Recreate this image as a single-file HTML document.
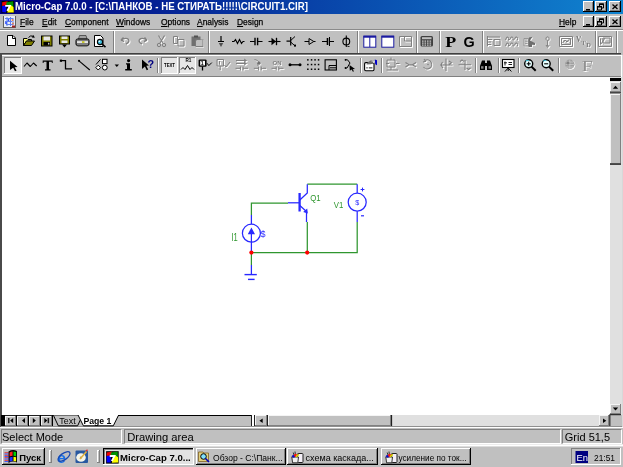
<!DOCTYPE html>
<html><head><meta charset="utf-8">
<style>
*{margin:0;padding:0;box-sizing:border-box}
html,body{width:623px;height:467px;overflow:hidden;background:#c0c0c0;font-family:"Liberation Sans",sans-serif;position:relative;-webkit-font-smoothing:antialiased}
body{will-change:transform}
.a{position:absolute}
.t{position:absolute;white-space:nowrap;line-height:1}
.sunk{position:absolute;border-top:1px solid #808080;border-left:1px solid #808080;border-right:1px solid #fff;border-bottom:1px solid #fff}
.mn{position:absolute;white-space:nowrap;line-height:1;font-size:9.4px;color:#000;top:17px;transform:scaleX(.9);transform-origin:0 0;-webkit-text-stroke:0.25px #000}
svg{position:absolute;left:0;top:0;overflow:visible}
</style></head><body>

<!-- Title bar -->
<div class="a" style="left:0;top:0;width:623px;height:14px;background:linear-gradient(to right,#000080,#1084d0)"></div>
<div class="t" style="left:15px;top:1.1px;font-size:9.9px;font-weight:bold;color:#fff;transform:scaleX(.98) scaleY(1.08);transform-origin:0 0">Micro-Cap 7.0.0 - [C:\ПАНКОВ - НЕ СТИРАТЬ!!!!!\CIRCUIT1.CIR]</div>

<!-- Menu bar -->
<div class="a" style="left:0;top:29px;width:623px;height:1px;background:#8a8a8a"></div>
<div class="a" style="left:0;top:30px;width:623px;height:1px;background:#fff"></div>

<div class="mn" style="left:20px"><u>F</u>ile</div>
<div class="mn" style="left:42px"><u>E</u>dit</div>
<div class="mn" style="left:65px"><u>C</u>omponent</div>
<div class="mn" style="left:116px"><u>W</u>indows</div>
<div class="mn" style="left:160.5px"><u>O</u>ptions</div>
<div class="mn" style="left:197px"><u>A</u>nalysis</div>
<div class="mn" style="left:236.5px"><u>D</u>esign</div>
<div class="mn" style="left:559px"><u>H</u>elp</div>

<!-- Toolbar 2 frame -->
<div class="a" style="left:0;top:53px;width:621px;height:1px;background:#404040"></div>
<div class="a" style="left:0;top:54px;width:621px;height:1px;background:#808080"></div>
<div class="a" style="left:2px;top:55px;width:619px;height:1px;background:#fff"></div>
<div class="a" style="left:0;top:76px;width:621px;height:1px;background:#808080"></div>
<div class="a" style="left:0;top:53px;width:2px;height:374px;background:#4a4a4a"></div>

<!-- Canvas -->
<div class="a" style="left:2px;top:77px;width:608px;height:338px;background:#fff"></div>

<!-- Tab row -->
<div class="a" style="left:2px;top:415px;width:619px;height:12px;background:#c0c0c0"></div>
<div class="a" style="left:0;top:427px;width:623px;height:1px;background:#fff"></div>

<!-- Status bar -->
<div class="sunk" style="left:1px;top:429px;width:121px;height:15px"></div>
<div class="sunk" style="left:124px;top:429px;width:437px;height:15px"></div>
<div class="sunk" style="left:562px;top:429px;width:60px;height:15px"></div>
<div class="t" style="left:2px;top:431.6px;font-size:11px;color:#000">Select Mode</div>
<div class="t" style="left:127.2px;top:431.6px;font-size:11.2px;color:#000">Drawing area</div>
<div class="t" style="left:564.8px;top:431.6px;font-size:11px;color:#000">Grid 51,5</div>

<!-- Taskbar -->
<div class="a" style="left:0;top:444px;width:623px;height:1px;background:#ececec"></div><div class="a" style="left:0;top:445px;width:623px;height:1px;background:#fff"></div><div class="a" style="left:0;top:446px;width:623px;height:1px;background:#dcdcdc"></div>

<!--SVG-->
<svg width="623" height="467" viewBox="0 0 623 467">
<g shape-rendering="crispEdges"><rect x="583" y="1" width="11" height="11" fill="#c0c0c0"/><rect x="583" y="1" width="11" height="1" fill="#fff"/><rect x="583" y="1" width="1" height="11" fill="#fff"/><rect x="583" y="11" width="11" height="1" fill="#000"/><rect x="593" y="1" width="1" height="11" fill="#000"/><rect x="584" y="10" width="9" height="1" fill="#808080"/><rect x="592" y="2" width="1" height="9" fill="#808080"/><rect x="595" y="1" width="12" height="11" fill="#c0c0c0"/><rect x="595" y="1" width="12" height="1" fill="#fff"/><rect x="595" y="1" width="1" height="11" fill="#fff"/><rect x="595" y="11" width="12" height="1" fill="#000"/><rect x="606" y="1" width="1" height="11" fill="#000"/><rect x="596" y="10" width="10" height="1" fill="#808080"/><rect x="605" y="2" width="1" height="9" fill="#808080"/><rect x="609" y="1" width="12" height="11" fill="#c0c0c0"/><rect x="609" y="1" width="12" height="1" fill="#fff"/><rect x="609" y="1" width="1" height="11" fill="#fff"/><rect x="609" y="11" width="12" height="1" fill="#000"/><rect x="620" y="1" width="1" height="11" fill="#000"/><rect x="610" y="10" width="10" height="1" fill="#808080"/><rect x="619" y="2" width="1" height="9" fill="#808080"/><rect x="583" y="16" width="11" height="11" fill="#c0c0c0"/><rect x="583" y="16" width="11" height="1" fill="#fff"/><rect x="583" y="16" width="1" height="11" fill="#fff"/><rect x="583" y="26" width="11" height="1" fill="#000"/><rect x="593" y="16" width="1" height="11" fill="#000"/><rect x="584" y="25" width="9" height="1" fill="#808080"/><rect x="592" y="17" width="1" height="9" fill="#808080"/><rect x="595" y="16" width="12" height="11" fill="#c0c0c0"/><rect x="595" y="16" width="12" height="1" fill="#fff"/><rect x="595" y="16" width="1" height="11" fill="#fff"/><rect x="595" y="26" width="12" height="1" fill="#000"/><rect x="606" y="16" width="1" height="11" fill="#000"/><rect x="596" y="25" width="10" height="1" fill="#808080"/><rect x="605" y="17" width="1" height="9" fill="#808080"/><rect x="609" y="16" width="12" height="11" fill="#c0c0c0"/><rect x="609" y="16" width="12" height="1" fill="#fff"/><rect x="609" y="16" width="1" height="11" fill="#fff"/><rect x="609" y="26" width="12" height="1" fill="#000"/><rect x="620" y="16" width="1" height="11" fill="#000"/><rect x="610" y="25" width="10" height="1" fill="#808080"/><rect x="619" y="17" width="1" height="9" fill="#808080"/></g><rect x="586" y="9" width="4" height="1.5" fill="#000"/><path d="M599.5 4 H603.5 V8 H599.5 Z" fill="none" stroke="#000" stroke-width="1"/><rect x="599" y="3.5" width="5" height="1.5" fill="#000"/><path d="M597.5 6.5 H601.5 V10 H597.5 Z" fill="#c0c0c0" stroke="#000" stroke-width="1"/><rect x="597" y="6" width="5" height="1.5" fill="#000"/><path d="M612.5 4.5 L617.5 9 M617.5 4.5 L612.5 9" stroke="#000" stroke-width="1.3"/><rect x="586" y="24" width="4" height="1.5" fill="#000"/><path d="M599.5 19 H603.5 V23 H599.5 Z" fill="none" stroke="#000" stroke-width="1"/><rect x="599" y="18.5" width="5" height="1.5" fill="#000"/><path d="M597.5 21.5 H601.5 V25 H597.5 Z" fill="#c0c0c0" stroke="#000" stroke-width="1"/><rect x="597" y="21" width="5" height="1.5" fill="#000"/><path d="M612.5 19.5 L617.5 24 M617.5 19.5 L612.5 24" stroke="#000" stroke-width="1.3"/><rect x="1.6" y="1" width="12.6" height="12" fill="#000"/>
<path d="M2.2 2.2 L7.6 1.3 L6.8 5.2 L2.2 5.9 Z" fill="#f00000"/>
<path d="M6.4 2.2 L13.2 1.3 L13.4 7.5 L6.2 5.4 Z" fill="#009000"/>
<path d="M2.1 5.9 L6.5 5.4 L6.2 12.4 L2.2 12.3 Z" fill="#0000ff"/>
<path d="M9.8 4.6 L13.5 7 L13.8 12.4 L7.3 12.6 L8.4 8.8 Z" fill="#ffff00"/>
<path d="M5.2 5.8 H9.9 L7.3 10.9" fill="none" stroke="#fff" stroke-width="1.8"/>
<g shape-rendering="crispEdges">
<rect x="3" y="15.5" width="12.5" height="12.5" fill="#606060"/>
<rect x="3.8" y="16.3" width="11" height="11" fill="#e8ecf8"/>
</g>
<path d="M5 18.5 H13 M5 21.5 H12 M6 24.5 H13 M7 17 V26 M10.5 17 V26 M13 18 V25" stroke="#6080f0" stroke-width="1" fill="none"/>
<circle cx="6" cy="23" r="1" fill="#2040ff"/><circle cx="8.5" cy="20" r="0.9" fill="#2040ff"/><circle cx="12.5" cy="20" r="0.9" fill="#f08040"/><circle cx="13" cy="23.5" r="0.9" fill="#f08040"/>
<rect x="12" y="25.5" width="3" height="2" fill="#a02020"/>

<rect x="113" y="31" width="1" height="22" fill="#808080" shape-rendering="crispEdges"/><rect x="114" y="31" width="1" height="22" fill="#fff" shape-rendering="crispEdges"/>
<rect x="208" y="31" width="1" height="22" fill="#808080" shape-rendering="crispEdges"/><rect x="209" y="31" width="1" height="22" fill="#fff" shape-rendering="crispEdges"/>
<rect x="357" y="31" width="1" height="22" fill="#808080" shape-rendering="crispEdges"/><rect x="358" y="31" width="1" height="22" fill="#fff" shape-rendering="crispEdges"/>
<rect x="416" y="31" width="1" height="22" fill="#808080" shape-rendering="crispEdges"/><rect x="417" y="31" width="1" height="22" fill="#fff" shape-rendering="crispEdges"/>
<rect x="439" y="31" width="1" height="22" fill="#808080" shape-rendering="crispEdges"/><rect x="440" y="31" width="1" height="22" fill="#fff" shape-rendering="crispEdges"/>
<rect x="482" y="31" width="1" height="22" fill="#808080" shape-rendering="crispEdges"/><rect x="483" y="31" width="1" height="22" fill="#fff" shape-rendering="crispEdges"/>
<rect x="595" y="31" width="1" height="22" fill="#808080" shape-rendering="crispEdges"/><rect x="596" y="31" width="1" height="22" fill="#fff" shape-rendering="crispEdges"/>
<rect x="616" y="31" width="1" height="22" fill="#808080" shape-rendering="crispEdges"/><rect x="617" y="31" width="1" height="22" fill="#fff" shape-rendering="crispEdges"/>
<path d="M7.5 35.5 H13 L15.5 38 V45.5 H7.5 Z" fill="#fff" stroke="#000" stroke-width="1"/>
<path d="M12.5 35.5 V38.5 H15.5" fill="none" stroke="#000" stroke-width="1"/>
<path d="M23.5 38.5 H27 L28 39.5 H31.5 V41 H26.5 L23.5 45.5 Z" fill="#ffff80" stroke="#000" stroke-width="1"/>
<path d="M26.5 41 H34.5 L31.5 45.5 H23.5 Z" fill="#808000" stroke="#000" stroke-width="1"/>
<path d="M28.5 37.5 Q30.5 35 33 36.2" fill="none" stroke="#000" stroke-width="1"/>
<path d="M33.5 35 L34.8 37.8 L31.8 37.6 Z" fill="#000"/>
<rect x="41" y="35.5" width="11.5" height="11" fill="#000"/>
<rect x="42" y="36.5" width="9.5" height="9" fill="#808000"/>
<rect x="43.5" y="36.5" width="6.5" height="4" fill="#e8e8e8"/>
<rect x="43.5" y="42" width="6.5" height="3.5" fill="#000"/>
<rect x="48" y="42.8" width="1.4" height="1.8" fill="#c0c0c0"/>
<rect x="59" y="35.5" width="11" height="9" fill="#000"/>
<rect x="60" y="36.5" width="9" height="7" fill="#808000"/>
<rect x="61.5" y="36.5" width="6" height="2.5" fill="#e8e8e8"/>
<rect x="61.5" y="40.5" width="6" height="2.5" fill="#e8e8e8"/>
<path d="M62 44.5 H67 L64.5 47.5 Z" fill="#000"/>
<path d="M79.5 35.5 H86 L87 39 H78.5 Z" fill="#a0a0a0" stroke="#404040" stroke-width="0.8"/>
<rect x="76" y="39" width="13" height="6.5" rx="1.5" fill="#808080" stroke="#000" stroke-width="1"/>
<rect x="77" y="41.3" width="11" height="1.5" fill="#fff"/>
<rect x="82" y="41.3" width="2.5" height="1.5" fill="#c0c000"/>
<rect x="77.5" y="45" width="10" height="1.5" fill="#404040"/>
<path d="M94.5 35.5 H100.5 L103 38 V46.5 H94.5 Z" fill="#fff" stroke="#000" stroke-width="1"/>
<circle cx="100" cy="42" r="2.6" fill="#40c0e0" stroke="#000" stroke-width="1.1"/>
<path d="M102 44 L105.5 47.2" stroke="#000" stroke-width="1.6"/>
<circle cx="99.3" cy="41.3" r="0.8" fill="#fff"/>
<path d="M121 40 L123.5 37.5 M121 40 L124 41.5 M121 40 Q126 37 128.5 39.5 Q130 42 126 44" fill="none" stroke="#fff" stroke-width="1.4" transform="translate(1,1)"/><path d="M121 40 L123.5 37.5 M121 40 L124 41.5 M121 40 Q126 37 128.5 39.5 Q130 42 126 44" fill="none" stroke="#808080" stroke-width="1.4"/>
<path d="M147 40 L144.5 37.5 M147 40 L144 41.5 M147 40 Q142 37 139.5 39.5 Q138 42 142 44" fill="none" stroke="#fff" stroke-width="1.4" transform="translate(1,1)"/><path d="M147 40 L144.5 37.5 M147 40 L144 41.5 M147 40 Q142 37 139.5 39.5 Q138 42 142 44" fill="none" stroke="#808080" stroke-width="1.4"/>
<path d="M158.5 35.5 L163 43 M164.5 35.5 L160 43" fill="none" stroke="#fff" stroke-width="1.1" transform="translate(1,1)"/><path d="M158.5 35.5 L163 43 M164.5 35.5 L160 43" fill="none" stroke="#808080" stroke-width="1.1"/>
<circle cx="159" cy="45" r="1.7" fill="none" stroke="#808080" stroke-width="1"/><circle cx="164" cy="45" r="1.7" fill="none" stroke="#808080" stroke-width="1"/>
<path d="M173.5 36.5 H177.5 V43.5 H173.5 Z M178 39.5 H184 V46 H178 Z" fill="none" stroke="#fff" stroke-width="1" transform="translate(1,1)"/><path d="M173.5 36.5 H177.5 V43.5 H173.5 Z M178 39.5 H184 V46 H178 Z" fill="none" stroke="#808080" stroke-width="1"/>
<rect x="191.5" y="36.5" width="9" height="9.5" fill="#707070"/><rect x="194" y="35.5" width="4" height="2" fill="#505050"/>
<rect x="196.5" y="40.5" width="7" height="6.5" fill="#c0c0c0" stroke="#fff" stroke-width="1"/>
<rect x="196" y="40" width="7" height="6.5" fill="none" stroke="#808080" stroke-width="1"/>
<path d="M221 36 V41.5 M218 41.5 H224" stroke="#000" stroke-width="1.2"/>
<path d="M218.8 43 H223.2 L221 47 Z" fill="#505050"/>
<path d="M232 41.5 H234 L235.5 39.5 L237.5 43.5 L239.5 39.5 L241.5 43.5 L243 41.5 H244.5" fill="none" stroke="#000" stroke-width="1.1"/>
<path d="M250 41.5 H254.8 M257.8 41.5 H262.5" stroke="#000" stroke-width="1.1"/>
<path d="M255 37.8 V45.3 M257.6 37.8 V45.3" stroke="#000" stroke-width="1.4"/>
<path d="M268.5 41.5 H280.5" stroke="#000" stroke-width="1.1"/>
<path d="M271.5 37.8 L276 41.5 L271.5 45.2 Z" fill="#000"/>
<path d="M276.5 37.8 V45.2" stroke="#000" stroke-width="1.3"/>
<path d="M286.5 41.2 H290.7 M290.7 37 V45.5" stroke="#000" stroke-width="1.2"/>
<path d="M290.7 40.5 L295 36.5 M290.7 42 L294.5 45.5" stroke="#000" stroke-width="1"/>
<rect x="294" y="44.6" width="2" height="2" fill="#000"/>
<path d="M304.5 41.5 H309 M313.5 41.5 H315.5" stroke="#000" stroke-width="1.1"/>
<path d="M309 38.5 L313.8 41.5 L309 44.5 Z" fill="none" stroke="#000" stroke-width="1"/>
<path d="M322 41.5 H327 M329.5 41.5 H334" stroke="#000" stroke-width="1.1"/>
<path d="M327.5 38 V45 " stroke="#000" stroke-width="1.6"/><path d="M329.5 37 V46" stroke="#000" stroke-width="1"/>
<circle cx="346.3" cy="41.5" r="3.4" fill="none" stroke="#000" stroke-width="1.1"/>
<path d="M346.3 35.5 V47" stroke="#000" stroke-width="1.1"/><path d="M347.5 46.5 H349.5" stroke="#000" stroke-width="0.8"/>
<rect x="363.8" y="36.2" width="12" height="11" fill="#fff" stroke="#1a1aa0" stroke-width="1"/>
<rect x="363.5" y="35.7" width="12.5" height="2" fill="#1a1aa0"/><path d="M369.8 36 V47" stroke="#1a1aa0" stroke-width="1"/>
<rect x="381.8" y="36.2" width="12" height="11" fill="#fff" stroke="#1a1aa0" stroke-width="1"/>
<rect x="381.5" y="35.7" width="12.5" height="2" fill="#1a1aa0"/>
<path d="M399.5 36.5 H411.5 V46.5 H399.5 Z M404.5 36.5 V41 H411.5" fill="none" stroke="#fff" stroke-width="1" transform="translate(1,1)"/><path d="M399.5 36.5 H411.5 V46.5 H399.5 Z M404.5 36.5 V41 H411.5" fill="none" stroke="#808080" stroke-width="1"/>
<rect x="420.5" y="36" width="12.5" height="10.5" rx="1.5" fill="#404040"/>
<rect x="422" y="37.2" width="9.5" height="2" fill="#c0c0c0"/>
<rect x="422" y="40.5" width="1.6" height="1.2" fill="#d0d0d0"/>
<rect x="424.5" y="40.5" width="1.6" height="1.2" fill="#d0d0d0"/>
<rect x="427" y="40.5" width="1.6" height="1.2" fill="#d0d0d0"/>
<rect x="429.5" y="40.5" width="1.6" height="1.2" fill="#d0d0d0"/>
<rect x="422" y="42.5" width="1.6" height="1.2" fill="#d0d0d0"/>
<rect x="424.5" y="42.5" width="1.6" height="1.2" fill="#d0d0d0"/>
<rect x="427" y="42.5" width="1.6" height="1.2" fill="#d0d0d0"/>
<rect x="429.5" y="42.5" width="1.6" height="1.2" fill="#d0d0d0"/>
<rect x="422" y="44.5" width="1.6" height="1.2" fill="#d0d0d0"/>
<rect x="424.5" y="44.5" width="1.6" height="1.2" fill="#d0d0d0"/>
<rect x="427" y="44.5" width="1.6" height="1.2" fill="#d0d0d0"/>
<rect x="429.5" y="44.5" width="1.6" height="1.2" fill="#d0d0d0"/>
<text x="445.3" y="47" font-family="Liberation Serif" font-weight="bold" font-size="14" fill="#000" textLength="11" lengthAdjust="spacingAndGlyphs">P</text>
<text x="463.6" y="47" font-family="Liberation Sans" font-weight="bold" font-size="13.8" fill="#000" textLength="11.2" lengthAdjust="spacingAndGlyphs">G</text>
<path d="M487.5 37 H500 M487.5 39.5 H492 M494 39.5 H500 V45.5 H494 Z M487.5 42 H491 M487.5 44.5 H491 M487.5 36 V46" fill="none" stroke="#fff" stroke-width="1" transform="translate(1,1)"/><path d="M487.5 37 H500 M487.5 39.5 H492 M494 39.5 H500 V45.5 H494 Z M487.5 42 H491 M487.5 44.5 H491 M487.5 36 V46" fill="none" stroke="#808080" stroke-width="1"/>
<path d="M505.5 40 Q506.5 36 508 37 Q509 38 508.5 40 Q508.5 41 510 39 Q511 36 512.5 37 Q513.5 38 513 40 Q513 41 514.5 39 Q515.5 36 517 37 Q518 38 517.5 40" fill="none" stroke="#fff" stroke-width="1" transform="translate(1,1)"/><path d="M505.5 40 Q506.5 36 508 37 Q509 38 508.5 40 Q508.5 41 510 39 Q511 36 512.5 37 Q513.5 38 513 40 Q513 41 514.5 39 Q515.5 36 517 37 Q518 38 517.5 40" fill="none" stroke="#808080" stroke-width="1"/>
<path d="M505.5 46 Q506.5 42 508 43 Q509 44 508.5 46 Q508.5 47 510 45 Q511 42 512.5 43 Q513.5 44 513 46 Q513 47 514.5 45 Q515.5 42 517 43 Q518 44 517.5 46" fill="none" stroke="#fff" stroke-width="1" transform="translate(1,1)"/><path d="M505.5 46 Q506.5 42 508 43 Q509 44 508.5 46 Q508.5 47 510 45 Q511 42 512.5 43 Q513.5 44 513 46 Q513 47 514.5 45 Q515.5 42 517 43 Q518 44 517.5 46" fill="none" stroke="#808080" stroke-width="1"/>
<path d="M524 38.5 H528.5 V46 H524 Z M525 40 H527.5 M525 41.8 H527.5 M525 43.6 H527.5" fill="none" stroke="#fff" stroke-width="0.9" transform="translate(0.8,0.8)"/>
<path d="M524 38.5 H528.5 V46 H524 Z M525 40 H527.5 M525 41.8 H527.5 M525 43.6 H527.5" fill="none" stroke="#909090" stroke-width="0.9"/>
<path d="M529 37.5 L532.5 36.8 L531 39 L530 40.5 L535 43 V45 L532 44.8 V47 H528.5 V41 Z" fill="#fff" transform="translate(0.8,0.8)"/>
<path d="M529 37.5 L532.5 36.8 L531 39 L530 40.5 L535 43 V45 L532 44.8 V47 H528.5 V41 Z" fill="#6e6e6e"/>
<path d="M547.6 36.8 A1.6 1.9 0 1 1 547.5 36.8 M547.6 40.5 V46.5 M546 45 L547.6 47.5 L549.2 45" fill="none" stroke="#fff" stroke-width="1" transform="translate(1,1)"/><path d="M547.6 36.8 A1.6 1.9 0 1 1 547.5 36.8 M547.6 40.5 V46.5 M546 45 L547.6 47.5 L549.2 45" fill="none" stroke="#808080" stroke-width="1"/>
<path d="M559.5 36.5 H572.5 V46.5 H559.5 Z M561.5 38.5 H570.5 V44.5 H561.5 Z M562.5 43 L565 40 L567 42 L569.5 39" fill="none" stroke="#fff" stroke-width="1" transform="translate(1,1)"/><path d="M559.5 36.5 H572.5 V46.5 H559.5 Z M561.5 38.5 H570.5 V44.5 H561.5 Z M562.5 43 L565 40 L567 42 L569.5 39" fill="none" stroke="#808080" stroke-width="1"/>
<text x="576.8" y="42.3" font-family="Liberation Serif" font-weight="bold" font-size="7.5" fill="#fff">V</text><text x="576" y="41.5" font-family="Liberation Serif" font-weight="bold" font-size="7.5" fill="#7a7a7a">V</text>
<text x="582.3" y="45.3" font-family="Liberation Serif" font-weight="bold" font-size="6.5" fill="#fff">T</text><text x="581.5" y="44.5" font-family="Liberation Serif" font-weight="bold" font-size="6.5" fill="#7a7a7a">T</text>
<text x="587.0999999999999" y="48.099999999999994" font-family="Liberation Serif" font-weight="bold" font-size="6.5" fill="#fff">D</text><text x="586.3" y="47.3" font-family="Liberation Serif" font-weight="bold" font-size="6.5" fill="#7a7a7a">D</text>
<path d="M598.5 36.5 H611.5 V46.5 H598.5 Z M600.5 38.5 V44.5 M603 38 H610 V43 H603 Z M601 44 L605 38" fill="none" stroke="#fff" stroke-width="1" transform="translate(1,1)"/><path d="M598.5 36.5 H611.5 V46.5 H598.5 Z M600.5 38.5 V44.5 M603 38 H610 V43 H603 Z M601 44 L605 38" fill="none" stroke="#808080" stroke-width="1"/>
<rect x="157" y="58" width="1" height="15" fill="#808080" shape-rendering="crispEdges"/><rect x="158" y="58" width="1" height="15" fill="#fff" shape-rendering="crispEdges"/>
<rect x="360" y="58" width="1" height="15" fill="#808080" shape-rendering="crispEdges"/><rect x="361" y="58" width="1" height="15" fill="#fff" shape-rendering="crispEdges"/>
<rect x="381" y="58" width="1" height="15" fill="#808080" shape-rendering="crispEdges"/><rect x="382" y="58" width="1" height="15" fill="#fff" shape-rendering="crispEdges"/>
<rect x="475" y="58" width="1" height="15" fill="#808080" shape-rendering="crispEdges"/><rect x="476" y="58" width="1" height="15" fill="#fff" shape-rendering="crispEdges"/>
<rect x="498" y="58" width="1" height="15" fill="#808080" shape-rendering="crispEdges"/><rect x="499" y="58" width="1" height="15" fill="#fff" shape-rendering="crispEdges"/>
<rect x="518" y="58" width="1" height="15" fill="#808080" shape-rendering="crispEdges"/><rect x="519" y="58" width="1" height="15" fill="#fff" shape-rendering="crispEdges"/>
<rect x="558" y="58" width="1" height="15" fill="#808080" shape-rendering="crispEdges"/><rect x="559" y="58" width="1" height="15" fill="#fff" shape-rendering="crispEdges"/>
<g shape-rendering="crispEdges"><rect x="4" y="57" width="18" height="17" fill="#e6e6e6"/><rect x="4" y="57" width="18" height="1" fill="#808080"/><rect x="4" y="57" width="1" height="17" fill="#808080"/><rect x="4" y="73" width="18" height="1" fill="#fff"/><rect x="21" y="57" width="1" height="17" fill="#fff"/></g>
<g shape-rendering="crispEdges"><rect x="161" y="57" width="17" height="17" fill="#e6e6e6"/><rect x="161" y="57" width="17" height="1" fill="#808080"/><rect x="161" y="57" width="1" height="17" fill="#808080"/><rect x="161" y="73" width="17" height="1" fill="#fff"/><rect x="177" y="57" width="1" height="17" fill="#fff"/></g>
<g shape-rendering="crispEdges"><rect x="179" y="57" width="17" height="17" fill="#e6e6e6"/><rect x="179" y="57" width="17" height="1" fill="#808080"/><rect x="179" y="57" width="1" height="17" fill="#808080"/><rect x="179" y="73" width="17" height="1" fill="#fff"/><rect x="195" y="57" width="1" height="17" fill="#fff"/></g>
<path d="M10 60.8 L17.6 67 L14.6 67.2 L16.6 70.6 L15 71.2 L13.2 67.8 L10 70 Z" fill="#000"/>
<path d="M24 66.5 L27 63 L30.3 66.5 L33.5 63 L36.7 66" fill="none" stroke="#000" stroke-width="1.1" stroke-linejoin="round"/>
<path d="M42.7 60.4 H52.7 V63 H51.8 V61.8 H49 V69.3 H50.5 V70.6 H45 V69.3 H46.5 V61.8 H43.6 V63 H42.7 Z" fill="#000"/>
<rect x="59.8" y="59.6" width="2.2" height="2.2" fill="#000"/><path d="M61 60.7 H65.5 V68.8 H72" fill="none" stroke="#000" stroke-width="1.3"/>
<circle cx="79" cy="60.8" r="1.1" fill="#000"/><path d="M79 60.8 L89.8 70" stroke="#000" stroke-width="1.1"/>
<path d="M96 64.5 L100.5 59.3" stroke="#000" stroke-width="1"/>
<rect x="102.5" y="59.3" width="4.5" height="4.3" fill="#fff" stroke="#000" stroke-width="1"/>
<path d="M98.2 65.2 L100.6 67.6 L98.2 70 L95.8 67.6 Z" fill="#fff" stroke="#000" stroke-width="1"/>
<circle cx="104.8" cy="67.6" r="2.4" fill="#fff" stroke="#000" stroke-width="1"/>
<path d="M114.6 64.6 H119 L116.8 66.9 Z" fill="#000"/>
<circle cx="128.6" cy="60.6" r="1.6" fill="#000"/>
<path d="M126 63.2 H130 V69 H131.8 V70.4 H125.2 V69 H127 V64.5 H126 Z" fill="#000"/>
<path d="M142 59.5 L149 65.5 L146.3 65.7 L148.2 69.4 L146.7 70.2 L144.9 66.6 L142 69 Z" fill="#000"/>
<text x="147.6" y="67.6" font-family="Liberation Sans" font-weight="bold" font-size="11.5" fill="#000080" textLength="6.6" lengthAdjust="spacingAndGlyphs">?</text>
<text x="164" y="67.3" font-family="Liberation Sans" font-weight="bold" font-size="4.6" fill="#000" textLength="11" lengthAdjust="spacingAndGlyphs">TEXT</text>
<text x="185.5" y="62.3" font-family="Liberation Sans" font-weight="bold" font-size="4.6" fill="#000">R1</text>
<path d="M181 69.5 L183 67.5 L185 69.5 L187.5 65.5 L190 69.5 L192 67.5 L194 69.5" fill="none" stroke="#000" stroke-width="1"/>
<rect x="198.6" y="59.4" width="8" height="7.4" rx="1.2" fill="#000"/>
<rect x="200.2" y="60.8" width="4.8" height="4.6" fill="#fff"/>
<text x="200.8" y="65.2" font-family="Liberation Sans" font-weight="bold" font-size="5.2" fill="#000">1</text>
<path d="M202.5 66.5 V70.5" stroke="#000" stroke-width="1.3"/>
<path d="M207 63.2 L208.8 65.6 L211.8 62.6" fill="none" stroke="#000" stroke-width="1"/>
<path d="M217 59.5 H223.5 V66 H217 Z M219.5 61 V64.5 M220.2 66 V70 M224.5 65 L226 67 L230 62" fill="none" stroke="#fff" stroke-width="1.0" transform="translate(1,1)"/><path d="M217 59.5 H223.5 V66 H217 Z M219.5 61 V64.5 M220.2 66 V70 M224.5 65 L226 67 L230 62" fill="none" stroke="#808080" stroke-width="1.0"/>
<path d="M236 60.5 H246 M244 59 L246.5 60.5 L244 62 M236 63.5 H246 M244 62.2 L246.5 63.5 L244 65" fill="none" stroke="#fff" stroke-width="1" transform="translate(1,1)"/><path d="M236 60.5 H246 M244 59 L246.5 60.5 L244 62 M236 63.5 H246 M244 62.2 L246.5 63.5 L244 65" fill="none" stroke="#808080" stroke-width="1"/>
<path d="M235.5 68.3 H240.45 M243.05 68.3 H248 M240.45 66.5 V70.3 M243.05 66.5 V70.3" fill="none" stroke="#fff" stroke-width="1" transform="translate(1,1)"/><path d="M235.5 68.3 H240.45 M243.05 68.3 H248 M240.45 66.5 V70.3 M243.05 66.5 V70.3" fill="none" stroke="#808080" stroke-width="1"/>
<path d="M254.5 59.5 L257.5 60.5 L259.5 63 M258 66 V63" fill="none" stroke="#fff" stroke-width="1" transform="translate(1,1)"/><path d="M254.5 59.5 L257.5 60.5 L259.5 63 M258 66 V63" fill="none" stroke="#808080" stroke-width="1"/>
<circle cx="259" cy="63.2" r="1.6" fill="#fff" transform="translate(0.8,0.8)"/><circle cx="259" cy="63.2" r="1.6" fill="#707070"/>
<path d="M253.8 68.3 H258.59999999999997 M261.2 68.3 H266 M258.59999999999997 66.5 V70.3 M261.2 66.5 V70.3" fill="none" stroke="#fff" stroke-width="1" transform="translate(1,1)"/><path d="M253.8 68.3 H258.59999999999997 M261.2 68.3 H266 M258.59999999999997 66.5 V70.3 M261.2 66.5 V70.3" fill="none" stroke="#808080" stroke-width="1"/>
<text x="272.5" y="65" font-family="Liberation Sans" font-weight="bold" font-size="6" fill="#fff" transform="translate(0.8,0.8)">ON</text><text x="272.5" y="65" font-family="Liberation Sans" font-weight="bold" font-size="6" fill="#808080">ON</text>
<path d="M271.5 68.3 H276.2 M278.8 68.3 H283.5 M276.2 66.5 V70.3 M278.8 66.5 V70.3" fill="none" stroke="#fff" stroke-width="1" transform="translate(1,1)"/><path d="M271.5 68.3 H276.2 M278.8 68.3 H283.5 M276.2 66.5 V70.3 M278.8 66.5 V70.3" fill="none" stroke="#808080" stroke-width="1"/>
<circle cx="290" cy="64.8" r="1.5" fill="#000"/><circle cx="300" cy="64.8" r="1.5" fill="#000"/><path d="M290 64.8 H300" stroke="#000" stroke-width="1.3"/>
<rect x="307.1" y="59.099999999999994" width="1.5" height="1.5" fill="#000"/>
<rect x="310.8" y="59.099999999999994" width="1.5" height="1.5" fill="#000"/>
<rect x="314.3" y="59.099999999999994" width="1.5" height="1.5" fill="#000"/>
<rect x="317.8" y="59.099999999999994" width="1.5" height="1.5" fill="#000"/>
<rect x="307.1" y="63.8" width="1.5" height="1.5" fill="#000"/>
<rect x="310.8" y="63.8" width="1.5" height="1.5" fill="#000"/>
<rect x="314.3" y="63.8" width="1.5" height="1.5" fill="#000"/>
<rect x="317.8" y="63.8" width="1.5" height="1.5" fill="#000"/>
<rect x="307.1" y="68.5" width="1.5" height="1.5" fill="#000"/>
<rect x="310.8" y="68.5" width="1.5" height="1.5" fill="#000"/>
<rect x="314.3" y="68.5" width="1.5" height="1.5" fill="#000"/>
<rect x="317.8" y="68.5" width="1.5" height="1.5" fill="#000"/>
<rect x="325.1" y="59.8" width="11.3" height="10.2" fill="none" stroke="#000" stroke-width="1.1"/>
<path d="M329 70 V65.5 H336.4 M330 67.8 H336" fill="none" stroke="#000" stroke-width="1"/>
<path d="M345 59.8 H347.5 L350 63 L347 68 H345.5" fill="none" stroke="#000" stroke-width="1"/>
<path d="M349.5 65 L355 69 L352.6 69.2 L354 71.2 L352.9 71.8 L351.6 69.6 L349.8 70.8 Z" fill="#000"/>
<circle cx="345.5" cy="68" r="0.9" fill="#000"/><circle cx="345.5" cy="59.8" r="0.9" fill="#000"/>
<rect x="364.6" y="62.6" width="9.4" height="8.2" rx="1.2" fill="#fff" stroke="#000" stroke-width="1.1"/>
<path d="M366.5 64.5 Q367 62.5 369 61.5 L371 60.3 H374.2 L373.6 63.5 L370.5 64.3 Z" fill="#6a6a6a"/>
<path d="M371.5 61 H374 L373.5 63" fill="none" stroke="#fff" stroke-width="0.8"/>
<rect x="366.3" y="67" width="1.4" height="1.6" fill="#707070"/><rect x="368.8" y="67" width="3.6" height="1.6" fill="#707070"/>
<path d="M374.8 59.6 L377 60.2 V65.3 L375.2 64.2 Z" fill="#0000c8"/>
<path d="M387 60 H395 V67 H387 Z M386 63.5 H389 M396 63.5 H399.5 M391 57.5 V60 M391 67 V70 M386.5 70 H398" fill="none" stroke="#fff" stroke-width="1.0" transform="translate(1,1)"/><path d="M387 60 H395 V67 H387 Z M386 63.5 H389 M396 63.5 H399.5 M391 57.5 V60 M391 67 V70 M386.5 70 H398" fill="none" stroke="#808080" stroke-width="1.0"/>
<path d="M405.5 62.5 L409 64.8 L405.5 67 M416 62.5 L412.5 64.8 L416 67 M409 64.8 H412.5" fill="none" stroke="#fff" stroke-width="1.2" transform="translate(1,1)"/><path d="M405.5 62.5 L409 64.8 L405.5 67 M416 62.5 L412.5 64.8 L416 67 M409 64.8 H412.5" fill="none" stroke="#808080" stroke-width="1.2"/>
<path d="M425 60.5 A4.5 4.5 0 1 1 423.5 67 M424 59 L425.5 61.3 L423 62" fill="none" stroke="#fff" stroke-width="1.1" transform="translate(1,1)"/><path d="M425 60.5 A4.5 4.5 0 1 1 423.5 67 M424 59 L425.5 61.3 L423 62" fill="none" stroke="#808080" stroke-width="1.1"/>
<circle cx="428" cy="64.5" r="0.8" fill="#808080"/>
<path d="M440 65 H452.5 M446 58.5 V71 M442.5 62 Q440 65 443 68 M449 61 L451.5 62.8 L449 64.5" fill="none" stroke="#fff" stroke-width="1.1" transform="translate(1,1)"/><path d="M440 65 H452.5 M446 58.5 V71 M442.5 62 Q440 65 443 68 M449 61 L451.5 62.8 L449 64.5" fill="none" stroke="#808080" stroke-width="1.1"/>
<path d="M458.5 64.8 H471 M465 60 V70 M460 61.5 L462 60 L464 61.5 M466.5 68 L468.5 69.5 L470.5 68" fill="none" stroke="#fff" stroke-width="1.1" transform="translate(1,1)"/><path d="M458.5 64.8 H471 M465 60 V70 M460 61.5 L462 60 L464 61.5 M466.5 68 L468.5 69.5 L470.5 68" fill="none" stroke="#808080" stroke-width="1.1"/>
<path d="M480 70 V66 L482 60.5 H485 V70 Z M492 70 V66 L490 60.5 H487 V70 Z" fill="#000"/>
<rect x="484.5" y="63" width="3" height="3" fill="#000"/>
<rect x="481" y="66.2" width="2.5" height="2.5" fill="#808080"/><rect x="488.5" y="66.2" width="2.5" height="2.5" fill="#808080"/>
<rect x="502.5" y="59.5" width="11.5" height="8" fill="#fff" stroke="#000" stroke-width="1.1"/>
<path d="M505 61.5 V65.5 M504 62.8 H507 M508.5 62.5 H512 M508.5 64.5 H512" stroke="#000" stroke-width="0.9"/>
<path d="M508.2 67.5 V71 M508.2 68 L505 71.5 M508.2 68 L511.4 71.5" stroke="#000" stroke-width="1"/>
<circle cx="528.7" cy="63.8" r="4" fill="#e8ffff" stroke="#000" stroke-width="1.4"/>
<path d="M531.5 66.6 L535.7 70.8" stroke="#000" stroke-width="2"/>
<path d="M526.7 63.8 H530.7" stroke="#000" stroke-width="1.1"/>
<path d="M528.7 61.8 V65.8" stroke="#000" stroke-width="1.1"/>
<path d="M525.7 61 A3 3 0 0 1 528.7 60.5" fill="none" stroke="#40e0ff" stroke-width="0.9"/>
<circle cx="546.2" cy="63.8" r="4" fill="#e8ffff" stroke="#000" stroke-width="1.4"/>
<path d="M549.0 66.6 L553.2 70.8" stroke="#000" stroke-width="2"/>
<path d="M544.2 63.8 H548.2" stroke="#000" stroke-width="1.1"/>
<path d="M543.2 61 A3 3 0 0 1 546.2 60.5" fill="none" stroke="#40e0ff" stroke-width="0.9"/>
<circle cx="570.5" cy="65" r="4.8" fill="#fff"/><circle cx="569.8" cy="64.3" r="4.8" fill="#a0a0a0"/>
<path d="M566 62 H573.5 M565.5 64.5 H574 M566 67 H573.5 M569.8 59.8 V69" stroke="#d0d0d0" stroke-width="0.7"/>
<circle cx="568" cy="63" r="1.5" fill="#808080"/>
<text x="582.6" y="71.6" font-family="Liberation Serif" font-size="15" fill="#fff" textLength="11" lengthAdjust="spacingAndGlyphs">F</text><text x="581.8" y="70.8" font-family="Liberation Serif" font-size="15" fill="#909090" textLength="11" lengthAdjust="spacingAndGlyphs">F</text>
<g fill="none" stroke="#2f962f" stroke-width="1.25">
<path d="M251.4 215 V203 H288"/>
<path d="M251.4 253 V265"/>
<path d="M251.4 252.6 H357.2 V222"/>
<path d="M307.3 252.6 V222"/>
<path d="M307.3 184.2 H357.2"/>
</g>
<g fill="none" stroke="#2828ff" stroke-width="1.25">
<path d="M251.4 215 V224 M251.4 242 V253 M251.4 265 V274.5"/>
<circle cx="251.4" cy="233.2" r="9"/>
<path d="M251.4 233 V242"/>
<path d="M244.5 274.6 H256.8" stroke-width="1.4"/><path d="M248 279.4 H254.6" stroke-width="1.4"/>
<path d="M288 202.8 H299"/>
<path d="M299.6 193 V211.5" stroke-width="2.3"/>
<path d="M299.8 200 L307.3 193 V184.2"/>
<path d="M299.8 205.5 L306.5 211.5 V222"/>
<path d="M357.2 184.2 V193 M357.2 211.2 V222"/>
<circle cx="357.2" cy="202.2" r="9"/>
</g>
<path d="M247.8 234.3 L251.4 227.5 L255 234.3 Z" fill="#2828ff"/>
<path d="M303.2 212 L307.8 213.6 L307.2 208.4 Z" fill="#2828ff"/>
<path d="M360.6 189.5 H364.4 M362.5 187.6 V191.4" stroke="#2828ff" stroke-width="1"/>
<path d="M361 215.8 H364" stroke="#2828ff" stroke-width="1.2"/>
<text x="231.4" y="240.6" font-family="Liberation Sans" font-size="10" fill="#2f962f" textLength="6.3" lengthAdjust="spacingAndGlyphs">I1</text>
<text x="260.6" y="236.8" font-family="Liberation Sans" font-size="8.6" fill="#2828ff" textLength="5" lengthAdjust="spacingAndGlyphs">$</text>
<text x="310.3" y="201.3" font-family="Liberation Sans" font-size="8.6" fill="#2f962f" textLength="10.4" lengthAdjust="spacingAndGlyphs">Q1</text>
<text x="333.8" y="208.3" font-family="Liberation Sans" font-size="8.9" fill="#2f962f" textLength="9.5" lengthAdjust="spacingAndGlyphs">V1</text>
<text x="355.2" y="205.2" font-family="Liberation Sans" font-size="6.8" fill="#2828ff" textLength="4" lengthAdjust="spacingAndGlyphs">$</text>
<circle cx="251.4" cy="252.6" r="2.1" fill="#ff0000"/><circle cx="307.2" cy="252.6" r="2.1" fill="#ff0000"/>
<g shape-rendering="crispEdges">
<rect x="610" y="77" width="12" height="338" fill="#e0e0e0"/>
<rect x="622" y="55" width="1" height="372" fill="#d8d8d8"/>
<rect x="621" y="55" width="1" height="22" fill="#fff"/>
<rect x="610" y="78" width="11" height="3" fill="#000"/>
</g>
<g shape-rendering="crispEdges"><rect x="610" y="82" width="11" height="10" fill="#c0c0c0"/><rect x="610" y="82" width="11" height="1" fill="#f4f4f4"/><rect x="610" y="82" width="1" height="10" fill="#f4f4f4"/><rect x="610" y="91" width="11" height="1" fill="#808080"/><rect x="620" y="82" width="1" height="10" fill="#808080"/></g>
<path d="M612.8 88.8 H618.2 L615.5 85.8 Z" fill="#000"/>
<rect x="610" y="92.2" width="11" height="1.2" fill="#202020"/>
<g shape-rendering="crispEdges"><rect x="610" y="93.5" width="11" height="70.5" fill="#c0c0c0"/><rect x="610" y="93.5" width="11" height="1" fill="#f4f4f4"/><rect x="610" y="93.5" width="1" height="70.5" fill="#f4f4f4"/><rect x="610" y="163.0" width="11" height="1" fill="#808080"/><rect x="620" y="93.5" width="1" height="70.5" fill="#808080"/></g>
<rect x="610" y="163.5" width="11" height="1.3" fill="#202020"/>
<g shape-rendering="crispEdges"><rect x="610" y="404" width="11" height="10" fill="#c0c0c0"/><rect x="610" y="404" width="11" height="1" fill="#f4f4f4"/><rect x="610" y="404" width="1" height="10" fill="#f4f4f4"/><rect x="610" y="413" width="11" height="1" fill="#808080"/><rect x="620" y="404" width="1" height="10" fill="#808080"/></g>
<path d="M612.8 407.6 H618.2 L615.5 410.6 Z" fill="#000"/>
<g shape-rendering="crispEdges">
<rect x="1" y="415" width="254" height="1" fill="#202020"/>
<rect x="1" y="415" width="4" height="11" fill="#000"/>
<rect x="1" y="426" width="621" height="1" fill="#909090"/>
</g>
<g shape-rendering="crispEdges"><rect x="5" y="416" width="11" height="10" fill="#c0c0c0"/><rect x="5" y="416" width="11" height="1" fill="#f4f4f4"/><rect x="5" y="416" width="1" height="10" fill="#f4f4f4"/><rect x="5" y="425" width="11" height="1" fill="#808080"/><rect x="15" y="416" width="1" height="10" fill="#808080"/></g>
<g shape-rendering="crispEdges"><rect x="17" y="416" width="11" height="10" fill="#c0c0c0"/><rect x="17" y="416" width="11" height="1" fill="#f4f4f4"/><rect x="17" y="416" width="1" height="10" fill="#f4f4f4"/><rect x="17" y="425" width="11" height="1" fill="#808080"/><rect x="27" y="416" width="1" height="10" fill="#808080"/></g>
<g shape-rendering="crispEdges"><rect x="29" y="416" width="11" height="10" fill="#c0c0c0"/><rect x="29" y="416" width="11" height="1" fill="#f4f4f4"/><rect x="29" y="416" width="1" height="10" fill="#f4f4f4"/><rect x="29" y="425" width="11" height="1" fill="#808080"/><rect x="39" y="416" width="1" height="10" fill="#808080"/></g>
<g shape-rendering="crispEdges"><rect x="41" y="416" width="11" height="10" fill="#c0c0c0"/><rect x="41" y="416" width="11" height="1" fill="#f4f4f4"/><rect x="41" y="416" width="1" height="10" fill="#f4f4f4"/><rect x="41" y="425" width="11" height="1" fill="#808080"/><rect x="51" y="416" width="1" height="10" fill="#808080"/></g>
<g shape-rendering="crispEdges"><rect x="16" y="415" width="1" height="11" fill="#000"/><rect x="28" y="415" width="1" height="11" fill="#000"/><rect x="40" y="415" width="1" height="11" fill="#000"/><rect x="52" y="415" width="1" height="11" fill="#000"/></g>
<rect x="8" y="418" width="1.5" height="5.2" fill="#202020"/><path d="M13.2 418 V423.2 L10.2 420.6 Z" fill="#000"/>
<path d="M25 418 V423.2 L22 420.6 Z" fill="#000"/>
<path d="M32.8 418 V423.2 L35.8 420.6 Z" fill="#000"/>
<path d="M44.3 418 V423.2 L47.3 420.6 Z" fill="#000"/><rect x="47.6" y="418" width="1.5" height="5.2" fill="#202020"/>
<path d="M53.5 415.5 L58.3 425.8 H77.6 L82.4 415.5 Z" fill="#c0c0c0"/>
<path d="M53.5 415.5 L58.3 425.8 H77.6 L82.4 415.5" fill="none" stroke="#000" stroke-width="1"/>
<text x="59.3" y="423.9" font-family="Liberation Sans" font-size="8.2" fill="#000" textLength="16.3" lengthAdjust="spacingAndGlyphs">Text</text>
<path d="M78 415 L83.4 425.8 H113.3 L118.4 415 Z" fill="#fff"/>
<path d="M78 415 L83.4 425.8 H113.3 L118.4 415.5" fill="none" stroke="#000" stroke-width="1"/>
<text x="83.4" y="424.3" font-family="Liberation Sans" font-weight="bold" font-size="9.4" fill="#000" textLength="28" lengthAdjust="spacingAndGlyphs">Page 1</text>
<path d="M118 415.5 H252" stroke="#000" stroke-width="1"/>
<g shape-rendering="crispEdges"><rect x="251" y="415" width="1" height="11" fill="#202020"/><rect x="252" y="415" width="2" height="11" fill="#fff"/><rect x="254" y="415" width="1" height="11" fill="#202020"/></g>
<g shape-rendering="crispEdges"><rect x="255" y="415" width="12" height="11" fill="#c0c0c0"/><rect x="255" y="415" width="12" height="1" fill="#f4f4f4"/><rect x="255" y="415" width="1" height="11" fill="#f4f4f4"/><rect x="255" y="425" width="12" height="1" fill="#808080"/><rect x="266" y="415" width="1" height="11" fill="#808080"/></g>
<path d="M262.7 418.5 V423 L259.4 420.75 Z" fill="#000"/>
<rect x="267" y="415" width="1.2" height="11" fill="#202020"/>
<g shape-rendering="crispEdges"><rect x="268" y="415" width="123" height="11" fill="#c0c0c0"/><rect x="268" y="415" width="123" height="1" fill="#f4f4f4"/><rect x="268" y="415" width="1" height="11" fill="#f4f4f4"/><rect x="268" y="425" width="123" height="1" fill="#808080"/><rect x="390" y="415" width="1" height="11" fill="#808080"/></g>
<rect x="391" y="415" width="1.3" height="11" fill="#202020"/>
<rect x="392.3" y="415" width="206.7" height="11" fill="#e0e0e0"/>
<g shape-rendering="crispEdges"><rect x="599" y="415" width="10" height="11" fill="#c0c0c0"/><rect x="599" y="415" width="10" height="1" fill="#f4f4f4"/><rect x="599" y="415" width="1" height="11" fill="#f4f4f4"/><rect x="599" y="425" width="10" height="1" fill="#808080"/><rect x="608" y="415" width="1" height="11" fill="#808080"/></g>
<path d="M603 418.5 V423 L606.3 420.75 Z" fill="#000"/>
<rect x="609" y="415" width="13" height="11" fill="#c0c0c0"/>
<path d="M609.8 426 V415 Q609.8 414.6 610.5 414.6 H621" fill="none" stroke="#303030" stroke-width="1.3"/>
<g shape-rendering="crispEdges"><rect x="2" y="448" width="43" height="17" fill="#c0c0c0"/><rect x="2" y="448" width="43" height="1" fill="#fff"/><rect x="2" y="448" width="1" height="17" fill="#fff"/><rect x="2" y="464" width="43" height="1" fill="#000"/><rect x="44" y="448" width="1" height="17" fill="#000"/><rect x="3" y="463" width="41" height="1" fill="#808080"/><rect x="43" y="449" width="1" height="15" fill="#808080"/></g>
<path d="M4.5 452.8 H8.5 M4.5 455.3 H8.5 M4.5 457.8 H8.5 M4.5 460.3 H8.5" stroke="#e03030" stroke-width="1.1"/>
<path d="M4.5 454 H8.5 M4.5 456.5 H8.5 M4.5 459 H8.5 M4.5 461.5 H8.5" stroke="#3050ff" stroke-width="0.9"/>
<path d="M8.5 451.5 Q12.5 449 17 451 V462.5 Q12.5 460.5 8.5 463 Z" fill="#000"/>
<path d="M9.6 452.4 Q11.3 451.3 12.6 451.4 V455.8 Q11 455.8 9.6 456.6 Z" fill="#ff2020"/>
<path d="M13.5 451.4 Q14.8 451.4 16.1 452 V456.4 Q14.8 455.8 13.5 455.8 Z" fill="#00d000"/>
<path d="M9.6 457.5 Q11.3 456.7 12.6 456.7 V461 Q11 461 9.6 461.8 Z" fill="#2030ff"/>
<path d="M13.5 456.7 Q14.8 456.7 16.1 457.3 V461.6 Q14.8 461 13.5 461 Z" fill="#ffff00"/>
<text x="19.3" y="461" font-family="Liberation Sans" font-weight="bold" font-size="9.8" fill="#000" textLength="21.8" lengthAdjust="spacingAndGlyphs">Пуск</text>
<g shape-rendering="crispEdges"><rect x="49" y="450" width="3" height="13" fill="#808080"/><rect x="49" y="450" width="2" height="12" fill="#fff"/><rect x="50" y="451" width="1" height="11" fill="#c0c0c0"/></g>
<text x="57.3" y="463.2" font-family="Liberation Sans" font-weight="bold" font-size="15.5" fill="#1870e8">e</text>
<ellipse cx="64" cy="456.5" rx="7" ry="3.2" transform="rotate(-35 64 456.5)" fill="none" stroke="#1848b0" stroke-width="1.3"/>
<rect x="75.5" y="450.5" width="12.5" height="12.5" rx="1" fill="#2858a0"/>
<ellipse cx="81" cy="457.5" rx="4.8" ry="4.3" fill="#f4f4e8"/>
<circle cx="81" cy="457.5" r="1.1" fill="#808080"/>
<path d="M80 459 L86.5 451.5" stroke="#e0b040" stroke-width="1.6"/><path d="M86 451 L87.5 449.8" stroke="#e03030" stroke-width="1.4"/>
<g shape-rendering="crispEdges"><rect x="97" y="450" width="3" height="13" fill="#808080"/><rect x="97" y="450" width="2" height="12" fill="#fff"/><rect x="98" y="451" width="1" height="11" fill="#c0c0c0"/></g>
<g shape-rendering="crispEdges"><rect x="103" y="448" width="91" height="17" fill="#e2e2e2"/><rect x="103" y="448" width="91" height="1" fill="#000"/><rect x="103" y="448" width="1" height="17" fill="#000"/><rect x="104" y="449" width="89" height="1" fill="#808080"/><rect x="104" y="449" width="1" height="15" fill="#808080"/><rect x="103" y="464" width="91" height="1" fill="#fff"/><rect x="193" y="448" width="1" height="17" fill="#fff"/></g>
<g transform="translate(104.5,450.2)"><rect x="1.6" y="1" width="12.6" height="12.4" fill="#000"/><path d="M2.2 2.2 L7.6 1.3 L6.8 5.2 L2.2 5.9 Z" fill="#f00000"/><path d="M6.4 2.2 L13.2 1.3 L13.4 7.5 L6.2 5.4 Z" fill="#009000"/><path d="M2.1 5.9 L6.5 5.4 L6.2 12.4 L2.2 12.3 Z" fill="#0000ff"/><path d="M9.8 4.6 L13.5 7 L13.8 12.4 L7.3 12.6 L8.4 8.8 Z" fill="#ffff00"/><path d="M5.2 5.8 H9.9 L7.3 10.9" fill="none" stroke="#fff" stroke-width="1.8"/></g>
<text x="120" y="460.8" font-family="Liberation Sans" font-weight="bold" font-size="9.6" fill="#000" textLength="70.7" lengthAdjust="spacingAndGlyphs">Micro-Cap 7.0...</text>
<g shape-rendering="crispEdges"><rect x="196" y="448" width="90" height="17" fill="#c0c0c0"/><rect x="196" y="448" width="90" height="1" fill="#fff"/><rect x="196" y="448" width="1" height="17" fill="#fff"/><rect x="196" y="464" width="90" height="1" fill="#000"/><rect x="285" y="448" width="1" height="17" fill="#000"/><rect x="197" y="463" width="88" height="1" fill="#808080"/><rect x="284" y="449" width="1" height="15" fill="#808080"/></g>
<path d="M198.5 452 H203 L204 453 H208.5 V461.5 H198.5 Z" fill="#e0d080" stroke="#806020" stroke-width="0.8"/>
<circle cx="203.5" cy="456.5" r="2.8" fill="#80e0ff" stroke="#000" stroke-width="1"/><path d="M205.5 458.5 L209 462" stroke="#0000c0" stroke-width="1.6"/>
<text x="213" y="460.5" font-family="Liberation Sans" font-size="9" fill="#000" textLength="69.7" lengthAdjust="spacingAndGlyphs">Обзор - C:\Панк...</text>
<g shape-rendering="crispEdges"><rect x="287" y="448" width="91" height="17" fill="#c0c0c0"/><rect x="287" y="448" width="91" height="1" fill="#fff"/><rect x="287" y="448" width="1" height="17" fill="#fff"/><rect x="287" y="464" width="91" height="1" fill="#000"/><rect x="377" y="448" width="1" height="17" fill="#000"/><rect x="288" y="463" width="89" height="1" fill="#808080"/><rect x="376" y="449" width="1" height="15" fill="#808080"/></g>
<rect x="297.5" y="453.5" width="5.5" height="9" rx="0.8" fill="#f4f0f8" stroke="#202020" stroke-width="1"/>
<path d="M293.2 452.5 L294.5 456.5 M295 451.5 L295.5 456 M298.8 453 L297 456.5" stroke="#303030" stroke-width="1"/>
<path d="M291.8 457 H298.5 L297.8 462.8 H292.6 Z" fill="#f0f0f0" stroke="#202020" stroke-width="0.9"/>
<ellipse cx="293.6" cy="456.3" rx="1.7" ry="1.4" fill="#1010c0"/>
<ellipse cx="295.6" cy="455.3" rx="1.5" ry="1.5" fill="#ff1010"/>
<path d="M296 456.8 L298.7 454.3" stroke="#d8d000" stroke-width="1.7"/>
<text x="305.5" y="460.5" font-family="Liberation Sans" font-size="9" fill="#000" textLength="68.3" lengthAdjust="spacingAndGlyphs">схема каскада...</text>
<g shape-rendering="crispEdges"><rect x="381" y="448" width="90" height="17" fill="#c0c0c0"/><rect x="381" y="448" width="90" height="1" fill="#fff"/><rect x="381" y="448" width="1" height="17" fill="#fff"/><rect x="381" y="464" width="90" height="1" fill="#000"/><rect x="470" y="448" width="1" height="17" fill="#000"/><rect x="382" y="463" width="88" height="1" fill="#808080"/><rect x="469" y="449" width="1" height="15" fill="#808080"/></g>
<rect x="391.5" y="453.5" width="5.5" height="9" rx="0.8" fill="#f4f0f8" stroke="#202020" stroke-width="1"/>
<path d="M387.2 452.5 L388.5 456.5 M389 451.5 L389.5 456 M392.8 453 L391 456.5" stroke="#303030" stroke-width="1"/>
<path d="M385.8 457 H392.5 L391.8 462.8 H386.6 Z" fill="#f0f0f0" stroke="#202020" stroke-width="0.9"/>
<ellipse cx="387.6" cy="456.3" rx="1.7" ry="1.4" fill="#1010c0"/>
<ellipse cx="389.6" cy="455.3" rx="1.5" ry="1.5" fill="#ff1010"/>
<path d="M390 456.8 L392.7 454.3" stroke="#d8d000" stroke-width="1.7"/>
<text x="398.5" y="460.5" font-family="Liberation Sans" font-size="9" fill="#000" textLength="68" lengthAdjust="spacingAndGlyphs">усиление по ток...</text>
<g shape-rendering="crispEdges"><rect x="571" y="448" width="50" height="17" fill="#c0c0c0"/><rect x="571" y="448" width="50" height="1" fill="#808080"/><rect x="571" y="448" width="1" height="17" fill="#808080"/><rect x="571" y="464" width="50" height="1" fill="#fff"/><rect x="620" y="448" width="1" height="17" fill="#fff"/></g>
<rect x="575.5" y="451" width="12.5" height="12" fill="#000080"/>
<text x="576.5" y="460.8" font-family="Liberation Sans" font-size="9.4" fill="#fff">En</text>
<text x="594" y="460.8" font-family="Liberation Sans" font-size="9.4" fill="#000" textLength="21" lengthAdjust="spacingAndGlyphs">21:51</text>
</svg>
</body></html>
